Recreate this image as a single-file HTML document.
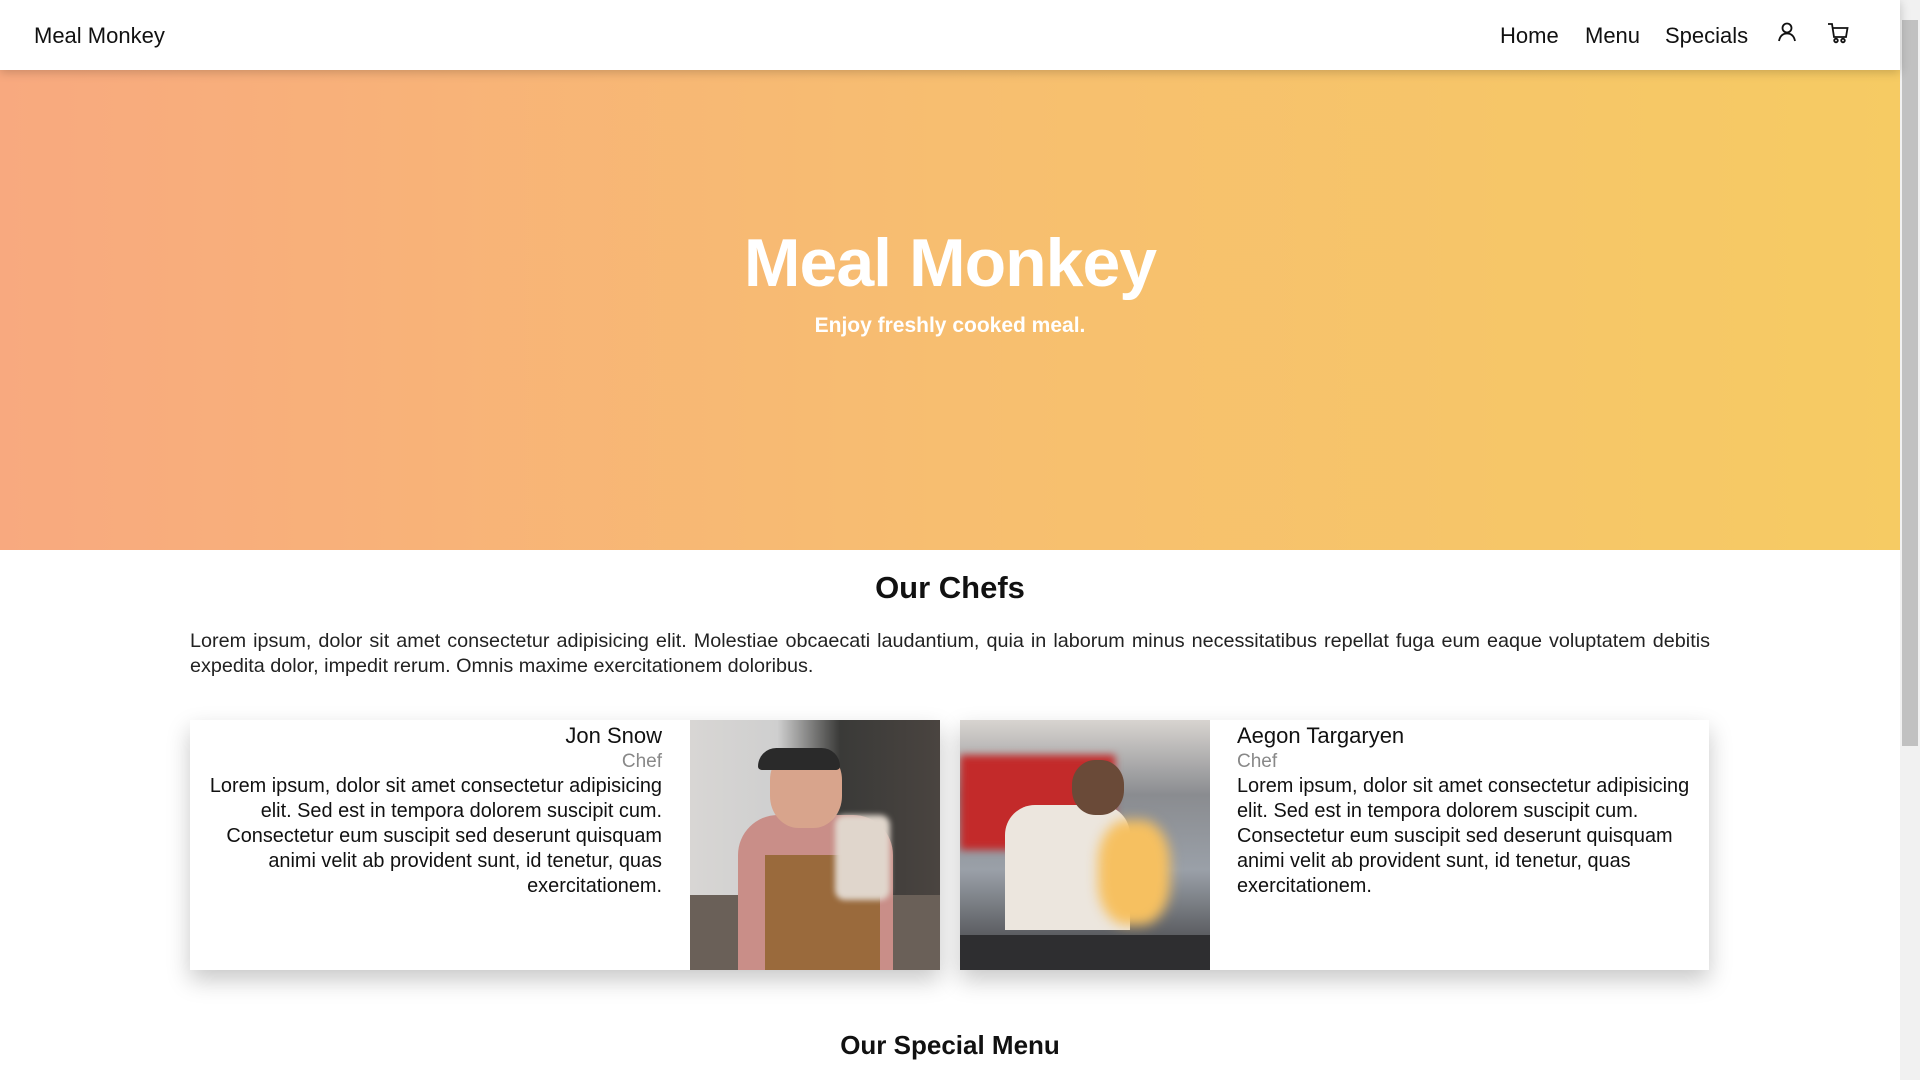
<!DOCTYPE html>
<html><head><meta charset="utf-8"><style>
*{margin:0;padding:0;box-sizing:border-box}
body{width:1920px;height:1080px;overflow:hidden;font-family:"Liberation Sans",sans-serif;color:#111;background:#fff;position:relative}
.hdr{position:absolute;left:0;top:0;width:1900px;height:70px;background:#fff;box-shadow:0 2px 10px rgba(0,0,0,.2);z-index:2}
.brand{position:absolute;left:34px;top:23px;font-size:22px}
.nav{position:absolute;top:23px;font-size:22px}
.hero{position:absolute;left:0;top:70px;width:1900px;height:480px;background:linear-gradient(90deg,#f8a97f 0%,#f7be70 50%,#f6cb63 100%)}
.hero h1{position:absolute;width:100%;top:154px;text-align:center;color:#fff;font-size:68px;font-weight:bold;letter-spacing:-1px}
.hero p{position:absolute;width:100%;top:244px;text-align:center;color:#fff;font-size:21px;font-weight:bold}
.sb{position:absolute;left:1900px;top:0;width:20px;height:1080px;background:#f1f1f1}
.sb .th{position:absolute;left:2px;top:20px;width:16px;height:726px;background:#c1c1c1}
h2{position:absolute;width:1900px;text-align:center;font-size:31px;font-weight:bold}
.intro{position:absolute;left:190px;top:629px;width:1520px;font-size:19.8px;line-height:25px;color:#222;text-align:justify}
.card{position:absolute;top:720px;height:250px;background:#fff;box-shadow:0 10px 22px rgba(0,0,0,.22)}
.img{position:absolute;top:720px;width:250px;height:250px;overflow:hidden}
.name{font-size:22px;line-height:27px}
.role{font-size:19px;color:#888;line-height:25px}
.txt{font-size:19.9px;line-height:25px;color:#111}
</style></head><body>
<div class="hdr">
<div class="brand">Meal Monkey</div>
<div class="nav" style="left:1500px">Home</div>
<div class="nav" style="left:1585px">Menu</div>
<div class="nav" style="left:1665px">Specials</div>
<svg style="position:absolute;left:1777px;top:22px" width="20" height="20" viewBox="0 0 20 20" fill="none" stroke="#111" stroke-width="1.8"><circle cx="10" cy="6" r="4.5"/><path d="M2 19c1-5 4-7.5 8-7.5s7 2.5 8 7.5"/></svg>
<svg style="position:absolute;left:1827px;top:22px" width="22" height="22" viewBox="0 0 22 22" fill="none" stroke="#111" stroke-width="1.8"><path d="M1 2h4l2 13h12l1.5-9H6"/><circle cx="9" cy="18.5" r="1.8"/><circle cx="16" cy="18.5" r="1.8"/></svg>
</div>
<div class="hero"><h1>Meal Monkey</h1><p>Enjoy freshly cooked meal.</p></div>
<h2 style="top:570px">Our Chefs</h2>
<div class="intro">Lorem ipsum, dolor sit amet consectetur adipisicing elit. Molestiae obcaecati laudantium, quia in laborum minus necessitatibus repellat fuga eum eaque voluptatem debitis expedita dolor, impedit rerum. Omnis maxime exercitationem doloribus.</div>
<div class="card" style="left:190px;width:750px"></div>
<div class="card" style="left:960px;width:749px"></div>
<div style="position:absolute;left:196px;top:722px;width:466px;text-align:right">
<div class="name">Jon Snow</div><div class="role">Chef</div>
<div class="txt">Lorem ipsum, dolor sit amet consectetur adipisicing<br>elit. Sed est in tempora dolorem suscipit cum.<br>Consectetur eum suscipit sed deserunt quisquam<br>animi velit ab provident sunt, id tenetur, quas<br>exercitationem.</div></div>
<div style="position:absolute;left:1237px;top:722px;width:470px">
<div class="name">Aegon Targaryen</div><div class="role">Chef</div>
<div class="txt">Lorem ipsum, dolor sit amet consectetur adipisicing<br>elit. Sed est in tempora dolorem suscipit cum.<br>Consectetur eum suscipit sed deserunt quisquam<br>animi velit ab provident sunt, id tenetur, quas<br>exercitationem.</div></div>
<div class="img" style="left:690px;background:linear-gradient(90deg,#d8d6d4 0%,#cfcfcf 35%,#3a3a38 60%,#4a4440 100%)">
<div style="position:absolute;left:0;top:175px;width:250px;height:75px;background:#6a6058"></div>
<div style="position:absolute;left:48px;top:95px;width:155px;height:155px;background:#c98e88;border-radius:40px 40px 0 0"></div>
<div style="position:absolute;left:75px;top:135px;width:115px;height:115px;background:#9a6a3c"></div>
<div style="position:absolute;left:80px;top:28px;width:72px;height:80px;background:#d8a48c;border-radius:40%"></div>
<div style="position:absolute;left:68px;top:28px;width:82px;height:22px;background:#2a2a2a;border-radius:20px 20px 4px 4px"></div>
<div style="position:absolute;left:145px;top:95px;width:55px;height:85px;background:#e0d6cc;border-radius:10px;filter:blur(3px)"></div>
</div>
<div class="img" style="left:960px;background:linear-gradient(180deg,#d8d4d0 0%,#8a8c90 30%,#9aa0a8 60%,#3a3a3c 100%)">
<div style="position:absolute;left:0;top:35px;width:155px;height:95px;background:#c32a2a;filter:blur(4px)"></div>
<div style="position:absolute;left:45px;top:85px;width:125px;height:125px;background:#ece6de;border-radius:30px 30px 0 0"></div>
<div style="position:absolute;left:112px;top:40px;width:52px;height:55px;background:#6a4a38;border-radius:45%"></div>
<div style="position:absolute;left:138px;top:100px;width:72px;height:105px;background:#f6c060;border-radius:40%;filter:blur(6px)"></div>
<div style="position:absolute;left:0;top:215px;width:250px;height:35px;background:#2e2e30"></div>
</div>
<h2 style="top:1030px;font-size:26px">Our Special Menu</h2>
<div class="sb"><div class="th"></div></div>
</body></html>
